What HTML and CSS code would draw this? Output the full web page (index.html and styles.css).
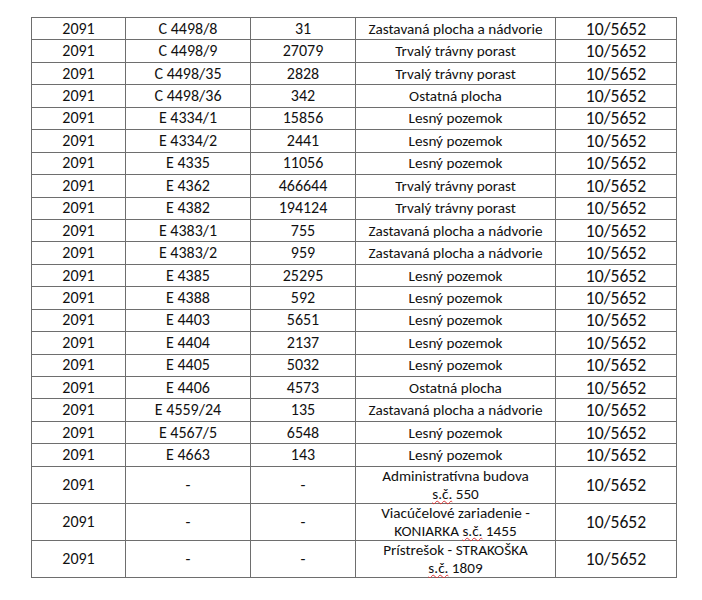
FILE: index.html
```html
<!DOCTYPE html>
<html>
<head>
<meta charset="utf-8">
<link rel="stylesheet" href="styles.css">
</head>
<body>
<table class="grid">
<colgroup><col class="c1"><col class="c2"><col class="c3"><col class="c4"><col class="c5"></colgroup>
<tbody>
<tr><td>2091</td><td>C 4498/8</td><td>31</td><td class="use">Zastavaná plocha a nádvorie</td><td class="lv">10/5652</td></tr>
<tr><td>2091</td><td>C 4498/9</td><td>27079</td><td class="use">Trvalý trávny porast</td><td class="lv">10/5652</td></tr>
<tr><td>2091</td><td>C 4498/35</td><td>2828</td><td class="use">Trvalý trávny porast</td><td class="lv">10/5652</td></tr>
<tr><td>2091</td><td>C 4498/36</td><td>342</td><td class="use">Ostatná plocha</td><td class="lv">10/5652</td></tr>
<tr><td>2091</td><td>E 4334/1</td><td>15856</td><td class="use">Lesný pozemok</td><td class="lv">10/5652</td></tr>
<tr><td>2091</td><td>E 4334/2</td><td>2441</td><td class="use">Lesný pozemok</td><td class="lv">10/5652</td></tr>
<tr><td>2091</td><td>E 4335</td><td>11056</td><td class="use">Lesný pozemok</td><td class="lv">10/5652</td></tr>
<tr><td>2091</td><td>E 4362</td><td>466644</td><td class="use">Trvalý trávny porast</td><td class="lv">10/5652</td></tr>
<tr><td>2091</td><td>E 4382</td><td>194124</td><td class="use">Trvalý trávny porast</td><td class="lv">10/5652</td></tr>
<tr><td>2091</td><td>E 4383/1</td><td>755</td><td class="use">Zastavaná plocha a nádvorie</td><td class="lv">10/5652</td></tr>
<tr><td>2091</td><td>E 4383/2</td><td>959</td><td class="use">Zastavaná plocha a nádvorie</td><td class="lv">10/5652</td></tr>
<tr><td>2091</td><td>E 4385</td><td>25295</td><td class="use">Lesný pozemok</td><td class="lv">10/5652</td></tr>
<tr><td>2091</td><td>E 4388</td><td>592</td><td class="use">Lesný pozemok</td><td class="lv">10/5652</td></tr>
<tr><td>2091</td><td>E 4403</td><td>5651</td><td class="use">Lesný pozemok</td><td class="lv">10/5652</td></tr>
<tr><td>2091</td><td>E 4404</td><td>2137</td><td class="use">Lesný pozemok</td><td class="lv">10/5652</td></tr>
<tr><td>2091</td><td>E 4405</td><td>5032</td><td class="use">Lesný pozemok</td><td class="lv">10/5652</td></tr>
<tr><td>2091</td><td>E 4406</td><td>4573</td><td class="use">Ostatná plocha</td><td class="lv">10/5652</td></tr>
<tr><td>2091</td><td>E 4559/24</td><td>135</td><td class="use">Zastavaná plocha a nádvorie</td><td class="lv">10/5652</td></tr>
<tr><td>2091</td><td>E 4567/5</td><td>6548</td><td class="use">Lesný pozemok</td><td class="lv">10/5652</td></tr>
<tr><td>2091</td><td>E 4663</td><td>143</td><td class="use">Lesný pozemok</td><td class="lv">10/5652</td></tr>
<tr class="tall"><td>2091</td><td>-</td><td>-</td><td class="use">Administratívna budova<br><span class="sp">s.č.</span> 550</td><td class="lv">10/5652</td></tr>
<tr class="tall"><td>2091</td><td>-</td><td>-</td><td class="use">Viacúčelové zariadenie -<br>KONIARKA <span class="sp">s.č.</span> 1455</td><td class="lv">10/5652</td></tr>
<tr class="tall"><td>2091</td><td>-</td><td>-</td><td class="use">Prístrešok - STRAKOŠKA<br><span class="sp">s.č.</span> 1809</td><td class="lv">10/5652</td></tr>
</tbody>
</table>
</body>
</html>
```
FILE: styles.css
```css
html, body {
  margin: 0;
  padding: 0;
  background: #fff;
}
body {
  padding: 17px 0 0 31px;
  font-family: Carlito, Lato, "Liberation Sans", sans-serif;
  color: #111;
}
.grid {
  border-collapse: collapse;
  table-layout: fixed;
  width: 646px;
}
.c1 { width: 94px; }
.c2 { width: 125px; }
.c3 { width: 105px; }
.c4 { width: 200px; }
.c5 { width: 121px; }
.grid td {
  border: 1px solid #6e6e6e;
  padding: 0;
  height: 21.45px;
  text-align: center;
  vertical-align: middle;
  font-size: 16px;
  line-height: 16px;
  white-space: nowrap;
}
.grid td.use {
  font-size: 15.2px;
  line-height: 18px;
}
.grid td.lv {
  font-size: 17.6px;
}
.grid tr.tall td {
  height: 36px;
}
.sp {
  text-decoration: underline wavy #d33;
  text-decoration-thickness: 0.5px;
  text-underline-offset: 1px;
}
```
